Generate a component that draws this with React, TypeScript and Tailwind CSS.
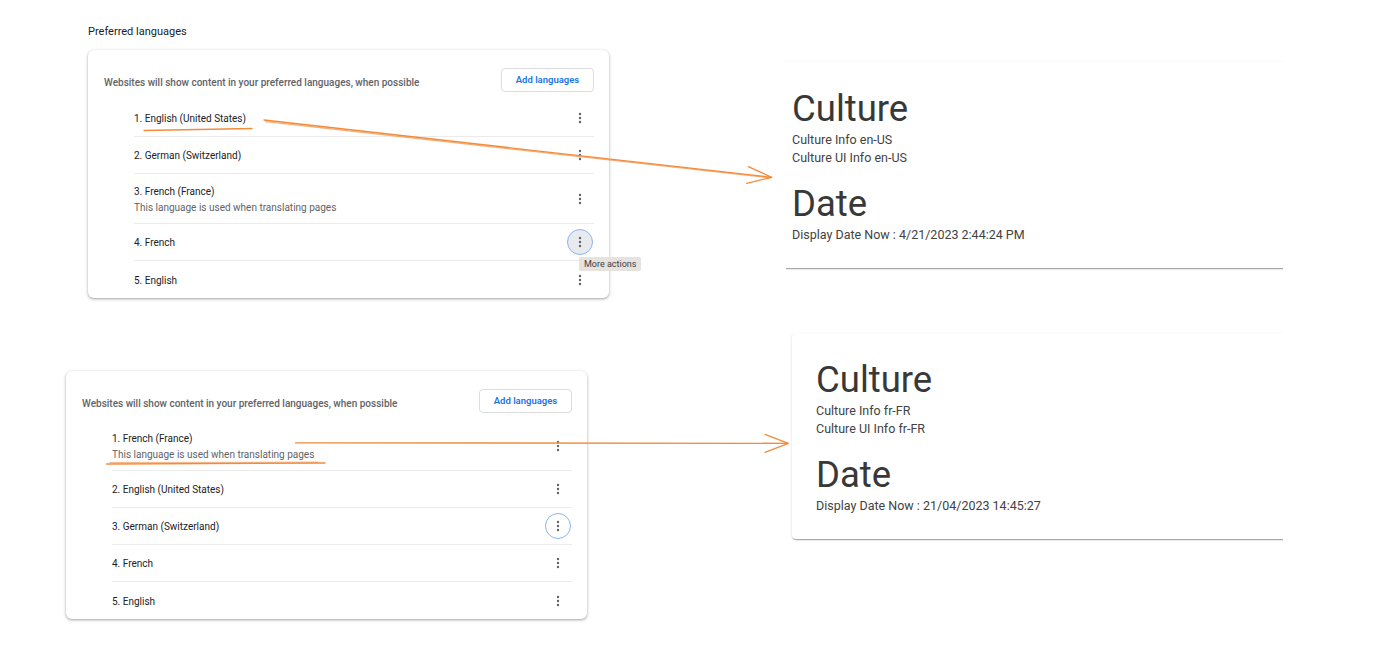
import React from "react";

type Row = {
  label: string;
  sub?: string;
  ring?: "hover" | "focus";
  tooltip?: string;
};

const topRows: Row[] = [
  { label: "1. English (United States)" },
  { label: "2. German (Switzerland)" },
  { label: "3. French (France)", sub: "This language is used when translating pages" },
  { label: "4. French", ring: "hover", tooltip: "More actions" },
  { label: "5. English" },
];

const bottomRows: Row[] = [
  { label: "1. French (France)", sub: "This language is used when translating pages" },
  { label: "2. English (United States)" },
  { label: "3. German (Switzerland)", ring: "focus" },
  { label: "4. French" },
  { label: "5. English" },
];

const MoreButton = ({ ring, tooltip }: { ring?: Row["ring"]; tooltip?: string }) => {
  let cls = "relative mr-[1px] flex h-[26px] w-[26px] items-center justify-center rounded-full";
  if (ring === "hover") cls += " border-[1.5px] border-[#8ab4f8] bg-[#e8eaed]";
  if (ring === "focus") cls += " border-[1.5px] border-[#8ab4f8] bg-white";

  return (
    <div className={cls}>
      <svg width="4" height="12" viewBox="0 0 4 12">
        <circle cx="2" cy="2" r="1.2" fill="#5f6368" />
        <circle cx="2" cy="6" r="1.2" fill="#5f6368" />
        <circle cx="2" cy="10" r="1.2" fill="#5f6368" />
      </svg>
      {tooltip && (
        <div className="absolute left-[11px] top-[27px] z-10 whitespace-nowrap rounded-[2px] bg-[#e6e2dd] px-[5px] text-[9px] leading-[14px] text-[#3c4043]">
          {tooltip}
        </div>
      )}
    </div>
  );
};

const LanguageCard = ({ rows }: { rows: Row[] }) => {
  return (
    <div className="w-[521px] rounded-[6px] bg-white pl-[16px] pr-[15px] pt-[18px] shadow-[0_1px_2px_rgba(60,64,67,0.3),0_1px_3px_1px_rgba(60,64,67,0.15)]">
      <div className="flex h-[24px] items-center justify-between">
        <span className="pt-[5px] text-[10px] font-medium text-[#5f6368]">
          Websites will show content in your preferred languages, when possible
        </span>
        <button className="h-[24px] w-[93px] rounded-[4px] border border-[#dadce0] bg-white text-[9.5px] font-semibold text-[#1a73e8]">
          Add languages
        </button>
      </div>

      <div className="ml-[30px] mt-[8px]">
        {rows.map((row) => (
          <div
            key={row.label}
            className={
              "flex items-center justify-between border-b border-[#ebebeb] last:border-b-0 " +
              (row.sub ? "h-[50px]" : "h-[37px]")
            }
          >
            <div className="pt-[2px]">
              <div className="text-[10px] leading-[16px] text-[#202124]">{row.label}</div>
              {row.sub && (
                <div className="text-[10px] leading-[16px] text-[#5f6368]">{row.sub}</div>
              )}
            </div>
            <MoreButton ring={row.ring} tooltip={row.tooltip} />
          </div>
        ))}
      </div>
    </div>
  );
};

const CultureCard = ({ culture, date }: { culture: string; date: string }) => {
  return (
    <>
      <h3 className="text-[36.5px] font-normal leading-[44px] text-[#383838]">Culture</h3>
      <p className="text-[12.5px] leading-[18px] text-[#424242]">Culture Info {culture}</p>
      <p className="text-[12.5px] leading-[18px] text-[#424242]">Culture UI Info {culture}</p>
      <h3 className="mt-[15px] text-[36.5px] font-normal leading-[44px] text-[#383838]">Date</h3>
      <p className="text-[12.5px] leading-[18px] text-[#424242]">Display Date Now : {date}</p>
    </>
  );
};

const paperShadow =
  "shadow-[0_2px_1px_-1px_rgba(0,0,0,0.2),0_1px_1px_0_rgba(0,0,0,0.14),0_1px_3px_0_rgba(0,0,0,0.12)]";

export default function App() {
  return (
    <div className="relative flex h-[651px] w-[1398px] overflow-hidden bg-white font-['Roboto',sans-serif]">
      {/* left: chrome language settings */}
      <div className="w-[640px] shrink-0">
        <div className="pl-[88px] pt-[25px]">
          <h2 className="h-[14px] text-[11px] leading-[14px] text-[#202124]">Preferred languages</h2>
          <div className="mt-[11px]">
            <LanguageCard rows={topRows} />
          </div>
        </div>
        <div className="mt-[73px] pl-[66px]">
          <LanguageCard rows={bottomRows} />
        </div>
      </div>

      {/* right: culture output */}
      <div className="ml-[146px] w-[497px] shrink-0">
        <div className="mt-[58px] overflow-hidden py-[4px]">
          <div className={"-ml-[18px] -mr-[20px] rounded-[4px] bg-white px-[24px] pb-[24px] pt-[25px] " + paperShadow}>
            <CultureCard culture="en-US" date="4/21/2023 2:44:24 PM" />
          </div>
        </div>
        <div className="mt-[57px] overflow-hidden py-[4px] pl-[6px]">
          <div className={"-mr-[20px] rounded-[4px] bg-white px-[24px] pb-[24px] pt-[25px] " + paperShadow}>
            <CultureCard culture="fr-FR" date="21/04/2023 14:45:27" />
          </div>
        </div>
      </div>

      {/* hand drawn annotations */}
      <svg
        className="pointer-events-none absolute inset-0"
        width="1398"
        height="651"
        viewBox="0 0 1398 651"
        fill="none"
        stroke="#f28b3b"
        strokeWidth="1.3"
        strokeLinecap="round"
        strokeLinejoin="round"
      >
        <path d="M144 130.5 Q198 129.3 252 128.5" />
        <path d="M264 120 L771.5 177.3" />
        <path d="M266 121.6 L770 177.8" strokeOpacity="0.7" />
        <path d="M748.3 166.7 L771.7 177.3 L746.7 183.3" />
        <path d="M106.5 464 Q215 463.2 325 463" />
        <path d="M110 462.6 L318 462.2" strokeOpacity="0.6" />
        <path d="M295.5 442.8 L788 443.3" />
        <path d="M765 434.3 L788.3 443.3 L765 452.3" />
      </svg>
    </div>
  );
}
